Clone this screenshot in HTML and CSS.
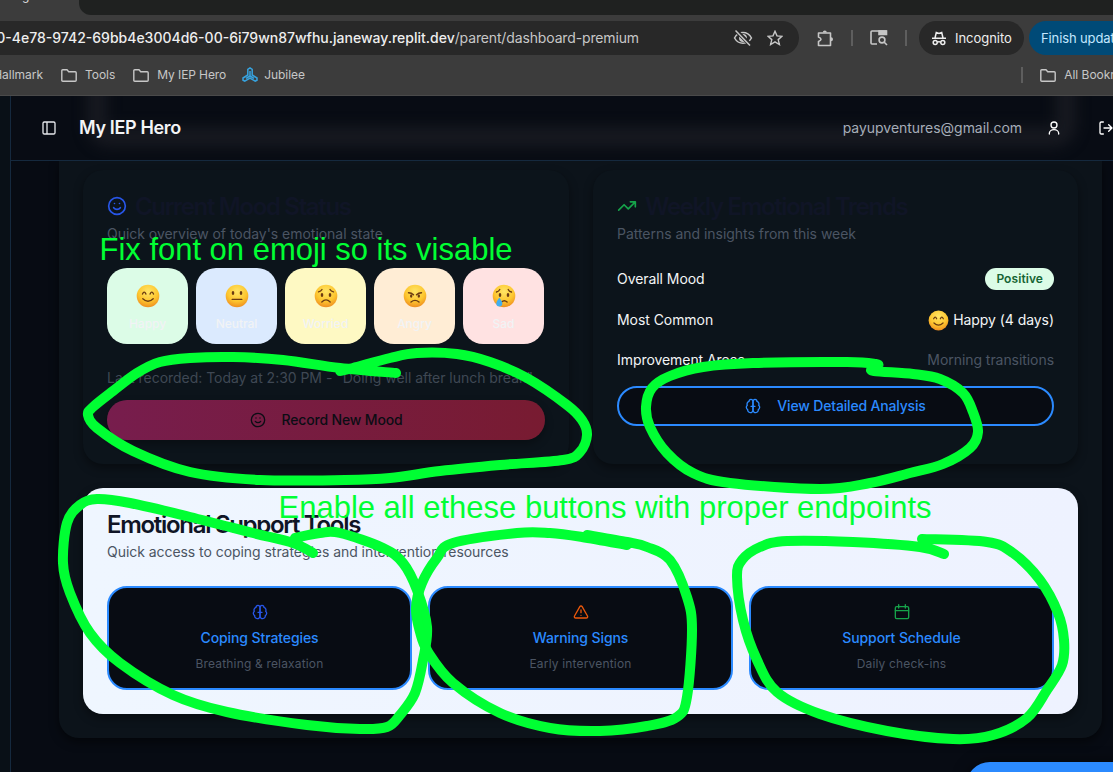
FILE: index.html
```html
<!DOCTYPE html>
<html lang="en">
<head>
<meta charset="utf-8">
<title>My IEP Hero</title>
<link rel="stylesheet" href="styles.css">
</head>
<body>
<svg class="defs" width="0" height="0" aria-hidden="true">
  <defs>
    <radialGradient id="skin" cx=".5" cy=".3" r=".72"><stop offset="0" stop-color="#ffe566"/><stop offset=".6" stop-color="#fdc62f"/><stop offset="1" stop-color="#ee8b20"/></radialGradient>
    <symbol id="folder" viewBox="0 0 16 13"><path d="M.8 1.8q0-1 1-1H6l1.7 1.9h6.5q1 0 1 1v7.500q0 1-1 1H1.800q-1 0-1-1z" fill="none" stroke="currentColor" stroke-width="1.4"/></symbol>
    <symbol id="smile" viewBox="0 0 24 24"><g fill="none" stroke="currentColor" stroke-width="2" stroke-linecap="round"><circle cx="12" cy="12" r="10"/><path d="M8 14s1.500 2 4 2 4-2 4-2M9 9h.01M15 9h.01"/></g></symbol>
    <symbol id="brain" viewBox="0 0 24 24"><g fill="none" stroke="currentColor" stroke-width="2" stroke-linecap="round" stroke-linejoin="round"><path d="M12 5a3 3 0 1 0-5.997.125 4 4 0 0 0-2.526 5.770 4 4 0 0 0 .556 6.588A4 4 0 1 0 12 18z"/><path d="M12 5a3 3 0 1 1 5.997.125 4 4 0 0 1 2.526 5.770 4 4 0 0 1-.556 6.588A4 4 0 1 1 12 18z"/><path d="M9 12.500h6"/></g></symbol>
    <symbol id="happy" viewBox="0 0 24 24"><circle cx="12" cy="12" r="11.300" fill="url(#skin)"/><g fill="none" stroke="#6b3b12" stroke-width="1.400" stroke-linecap="round"><path d="M6.500 10q1.700-3.800 3.400 0M14.100 10q1.700-3.800 3.400 0M6.800 14.800q5.200 5 10.400 0"/></g></symbol>
    <symbol id="neutral" viewBox="0 0 24 24"><circle cx="12" cy="12" r="11.300" fill="url(#skin)"/><g fill="#6b3b12"><ellipse cx="8" cy="9" rx="1.300" ry="2"/><ellipse cx="16" cy="9" rx="1.300" ry="2"/><rect x="6.500" y="14.700" width="11" height="1.400" rx=".7"/></g></symbol>
    <symbol id="worried" viewBox="0 0 24 24"><circle cx="12" cy="12" r="11.300" fill="url(#skin)"/><g fill="#6b3b12"><ellipse cx="8" cy="11" rx="1.300" ry="1.900"/><ellipse cx="16" cy="11" rx="1.300" ry="1.900"/></g><path d="M4.500 7.800q2.500-.3 3.500-2.300M19.500 7.800q-2.500-.3-3.500-2.300M7.800 18q4.200-4.400 8.400 0" fill="none" stroke="#6b3b12" stroke-width="1.300" stroke-linecap="round"/></symbol>
    <symbol id="angry" viewBox="0 0 24 24"><circle cx="12" cy="12" r="11.300" fill="url(#skin)"/><g fill="#6b3b12"><ellipse cx="8.200" cy="12" rx="1.200" ry="1.700"/><ellipse cx="15.800" cy="12" rx="1.200" ry="1.700"/></g><path d="M5.500 8.800q3 .1 5 2M18.500 8.800q-3 .1-5 2M8 18q4-3.300 8 0" fill="none" stroke="#6b3b12" stroke-width="1.400" stroke-linecap="round"/></symbol>
    <symbol id="sad" viewBox="0 0 24 24"><circle cx="12" cy="12" r="11.300" fill="url(#skin)"/><g fill="#6b3b12"><ellipse cx="8" cy="11" rx="1.300" ry="1.900"/><ellipse cx="16" cy="11" rx="1.300" ry="1.900"/></g><path d="M4.500 8q2.300-.5 3.300-2.500M19.500 8q-2.300-.5-3.300-2.500M9.500 18q2.800-2.600 5.600 0" fill="none" stroke="#6b3b12" stroke-width="1.300" stroke-linecap="round"/><path d="M7.300 13.500q3 4 3 6a3 3 0 0 1-6 0q0-2 3-6z" fill="#41aef0"/></symbol>
  </defs>
</svg>

<div class="browser">
  <div class="tabs"><div class="tab-end"><span>g</span></div><div class="strip"></div></div>
  <div class="toolbar">
    <div class="address">
      <div class="url"><b>60-4e78-9742-69bb4e3004d6-00-6i79wn87wfhu.janeway.replit.dev</b><span>/parent/dashboard-premium</span></div>
      <svg class="eye" viewBox="0 0 20 18" width="20" height="18" fill="none" stroke="currentColor" stroke-width="1.500"><path d="M1.500 9C5.500 1.800 14.500 1.800 18.500 9C14.500 16 5.500 16 1.500 9z"/><circle cx="10" cy="9" r="3.200" fill="currentColor"/><path d="M3 1.500 17.500 16" stroke="#282828" stroke-width="4"/><path d="M2.500 1.500 17 16.500"/></svg>
      <svg viewBox="0 0 16 16" width="16" height="16" fill="none" stroke="currentColor" stroke-width="1.400"><path d="m8 1.300 2 4.600 5 .4-3.800 3.300 1.200 4.900L8 11.900l-4.400 2.600 1.200-4.900L1 6.300l5-.4z"/></svg>
    </div>
    <svg class="puzzle" viewBox="0 0 17 17" width="17" height="17"><path d="M1.500 3h12v12.500h-12v-4q2.500-1 2.500-2.200T1.500 7z" fill="none" stroke="currentColor" stroke-width="1.600" stroke-linejoin="round"/><path d="M5.800 2.500a2 2 0 0 1 4 0zM14 7.300a2 2 0 0 1 0 4z" fill="currentColor"/></svg>
    <i class="bar"></i>
    <svg class="lens" viewBox="0 0 18 16" width="18" height="16" fill="none" stroke="currentColor" stroke-width="1.600"><path d="M7 14H2q-1 0-1-1V2q0-1 1-1h14v4"/><path d="M9 1h7.500v3.500H9z" fill="currentColor"/><circle cx="12" cy="10" r="2.900"/><path d="m14 12 3 3"/></svg>
    <i class="bar second"></i>
    <div class="incognito">
      <svg viewBox="0 0 16 15" width="16" height="15" fill="none" stroke="currentColor" stroke-width="1.500"><path d="M1 7.300h14M4 7 5.300 1.500 8 2.400l2.700-.9L12 7"/><circle cx="4.200" cy="11.500" r="2"/><circle cx="11.800" cy="11.500" r="2"/><path d="M6 11.200q2-1 4 0"/></svg>
      <span>Incognito</span>
    </div>
    <div class="update"><span>Finish update</span></div>
  </div>
  <div class="bookmarks">
    <span class="bm first">Hallmark</span>
    <span class="bm tools"><svg width="16" height="13"><use href="#folder"/></svg><span>Tools</span></span>
    <span class="bm hero"><svg width="16" height="13"><use href="#folder"/></svg><span>My IEP Hero</span></span>
    <span class="bm jubilee"><svg viewBox="0 0 16 16" width="16" height="16" fill="none" stroke="#37a3df" stroke-width="1.500"><path d="M5.800 8V2.500L8 1l2.200 1.500V8l4.800 3v2.200l-1.800 1L8 11.200l-5.200 3-1.800-1V11zM8 4v5l-4 2.300M8 9l4 2.300"/></svg><span>Jubilee</span></span>
    <span class="bm all"><i class="bar"></i><svg width="16" height="13"><use href="#folder"/></svg><span>All Bookmarks</span></span>
  </div>
</div>

<div class="app">
  <aside class="side"></aside>
  <div class="content">
    <header class="header">
      <div class="glow"></div>
      <svg viewBox="0 0 24 24" width="16" height="16" fill="none" stroke="#e5e7eb" stroke-width="2"><rect x="3" y="3" width="18" height="18" rx="2"/><path d="M9 3v18"/></svg>
      <h1>My IEP Hero</h1>
      <span class="email">payupventures@gmail.com</span>
      <svg class="user" viewBox="0 0 24 24" width="16" height="16" fill="none" stroke="#fff" stroke-width="2" stroke-linecap="round"><circle cx="12" cy="7.500" r="4.500"/><path d="M5 21v-1a7 5.500 0 0 1 14 0v1"/></svg>
      <svg class="logout" viewBox="0 0 24 24" width="16" height="16" fill="none" stroke="#fff" stroke-width="2" stroke-linecap="round" stroke-linejoin="round"><path d="M8 3H5a2 2 0 0 0-2 2v14a2 2 0 0 0 2 2h3M16 17l5-5-5-5M21 12H9"/></svg>
    </header>
    <main class="scroll">
      <section class="panel">
        <div class="pair">
          <article class="card">
            <h2 class="ghost"><svg class="blue" width="20" height="20"><use href="#smile"/></svg><span>Current Mood Status</span></h2>
            <p class="desc">Quick overview of today's emotional state</p>
            <div class="moods">
              <div class="mood green"><svg width="24" height="24"><use href="#happy"/></svg><span>Happy</span></div>
              <div class="mood sky"><svg width="24" height="24"><use href="#neutral"/></svg><span>Neutral</span></div>
              <div class="mood yellow"><svg width="24" height="24"><use href="#worried"/></svg><span>Worried</span></div>
              <div class="mood orange"><svg width="24" height="24"><use href="#angry"/></svg><span>Angry</span></div>
              <div class="mood red"><svg width="24" height="24"><use href="#sad"/></svg><span>Sad</span></div>
            </div>
            <p class="last">Last recorded: Today at 2:30 PM - "Doing well after lunch break"</p>
            <button class="btn record"><svg width="16" height="16"><use href="#smile"/></svg><span>Record New Mood</span></button>
          </article>
          <article class="card">
            <h2 class="ghost"><svg class="trend" viewBox="0 0 24 24" width="20" height="20" fill="none" stroke="currentColor" stroke-width="2" stroke-linecap="round" stroke-linejoin="round"><path d="m22 7-8.500 8.500-5-5L2 17M16 7h6v6"/></svg><span>Weekly Emotional Trends</span></h2>
            <p class="desc">Patterns and insights from this week</p>
            <div class="rows">
              <div class="row"><span>Overall Mood</span><span class="badge">Positive</span></div>
              <div class="row common"><span>Most Common</span><span class="value"><svg width="21" height="21"><use href="#happy"/></svg>Happy (4 days)</span></div>
              <div class="row"><span>Improvement Areas</span><span class="muted">Morning transitions</span></div>
            </div>
            <button class="btn analysis"><svg width="16" height="16"><use href="#brain"/></svg><span>View Detailed Analysis</span></button>
          </article>
        </div>
        <article class="card light">
          <h2><span>Emotional Support Tools</span></h2>
          <p class="desc">Quick access to coping strategies and intervention resources</p>
          <div class="tools-grid">
            <button class="tool"><svg class="blue" width="16" height="16"><use href="#brain"/></svg><span>Coping Strategies</span><small>Breathing &amp; relaxation</small></button>
            <button class="tool"><svg class="warn" viewBox="0 0 24 24" width="16" height="16" fill="none" stroke="currentColor" stroke-width="2" stroke-linecap="round" stroke-linejoin="round"><path d="m21.730 18-8-14a2 2 0 0 0-3.480 0l-8 14A2 2 0 0 0 4 21h16a2 2 0 0 0 1.730-3M12 9v4M12 17h.01"/></svg><span>Warning Signs</span><small>Early intervention</small></button>
            <button class="tool"><svg class="trend" viewBox="0 0 24 24" width="16" height="16" fill="none" stroke="currentColor" stroke-width="2" stroke-linecap="round" stroke-linejoin="round"><rect x="2" y="4" width="20" height="18" rx="2"/><path d="M7 1v5M17 1v5M2 10h20"/></svg><span>Support Schedule</span><small>Daily check-ins</small></button>
          </div>
        </article>
      </section>
    </main>
  </div>
  <div class="floating"></div>
</div>

<svg class="markup" width="1113" height="772">
  <g id="strokes"></g>
  <text x="99.500" y="260" textLength="413" lengthAdjust="spacingAndGlyphs">Fix font on emoji so its visable</text>
  <text x="278.500" y="518" textLength="653" lengthAdjust="spacingAndGlyphs">Enable all ethese buttons with proper endpoints</text>
</svg>
<script src="script.js"></script>
</body>
</html>
```
FILE: styles.css
```css
* { box-sizing: border-box; }
body { margin: 0; width: 1113px; height: 772px; overflow: hidden; position: relative; display: flex; flex-direction: column; background: #070b13; color: #f3f4f6; font: 14px/20px Inter, sans-serif; letter-spacing: -.03px; }
h1, h2, p { margin: 0; }
svg { display: block; flex: none; }
button { font: inherit; letter-spacing: inherit; }
.defs { position: absolute; }

/* browser chrome */
.browser { height: 96px; flex: none; background: #3c3c3c; border-bottom: 1px solid #4a4a4a; color: #c7c7c7; }
.tabs { display: flex; height: 15px; background: #3c3c3c; }
.tab-end { width: 79px; overflow: hidden; padding-left: 22px; color: #ddd; font-size: 12px; line-height: 12px; }
.tab-end span { display: block; margin-top: -10px; }
.strip { flex: 1; background: #1f2120; border-bottom-left-radius: 12px; }
.toolbar { display: flex; align-items: center; height: 46px; }
.address { flex: none; width: 799px; height: 34px; background: #282828; border-radius: 0 17px 17px 0; display: flex; align-items: center; padding-right: 16px; }
.url { width: 639px; display: flex; justify-content: flex-end; white-space: nowrap; font-size: 14px; flex: none; overflow: hidden; letter-spacing: -.14px; }
.url b { font-weight: 450; color: #eee; letter-spacing: 0; }
.eye { margin: 0 14px 0 94px; }
.puzzle { margin-left: 18px; }
.bar { width: 2px; height: 16px; background: #5e5e5e; flex: none; }
.toolbar .bar { margin-left: 17px; }
.lens { margin-left: 17px; }
.toolbar .bar.second { margin-left: 17px; }
.incognito { margin-left: 12px; width: 105px; height: 34px; border-radius: 17px; background: #282828; color: #eee; display: flex; align-items: center; gap: 8px; padding-left: 12px; flex: none; font-size: 13px; }
.update { margin-left: 5px; width: 120px; height: 34px; border-radius: 17px; background: #004a77; color: #c2e7ff; padding: 7px 0 0 12px; flex: none; font-size: 13px; white-space: nowrap; letter-spacing: -.12px; }
.bookmarks { display: flex; align-items: center; height: 28px; font-size: 12px; white-space: nowrap; }
.bm { display: flex; align-items: center; gap: 8px; flex: none; }
.first { width: 43px; justify-content: flex-end; }
.tools { margin-left: 18px; }
.hero { margin-left: 18px; letter-spacing: -.1px; }
.jubilee { margin-left: 16px; gap: 6px; }
.all { position: relative; margin-left: auto; margin-right: -32px; }
.all .bar { margin-right: 9px; }

/* application frame */
.app { flex: 1; display: flex; position: relative; min-height: 0; }
.side { width: 11px; background: #091017; border-right: 1px solid #15293e; }
.content { flex: 1; display: flex; flex-direction: column; min-width: 0; }
.header { position: relative; height: 65px; flex: none; overflow: hidden; display: flex; align-items: center; padding-left: 30px; background: #080c14; border-bottom: 1px solid #15293e; }
.header > svg, .header > h1, .header > span { position: relative; }
.glow { position: absolute; left: 76px; top: -100px; width: 989px; height: 151px; border: 20px solid #171920; border-radius: 22px; filter: blur(7px); }
.header h1 { margin-left: 22px; font-size: 18px; line-height: 28px; font-weight: 600; letter-spacing: -.35px; }
.email { margin-left: auto; color: #a6adb8; }
.user { margin-left: 24px; }
.logout { margin: 0 -1px 0 36px; }
.scroll { flex: 1; padding: 0 11px 34px 48px; background: #070b13; min-height: 0; }
.panel { height: 577px; border-radius: 0 0 20px 20px; background: #0c131a; padding: 9px 24px 24px; box-shadow: 0 4px 10px rgba(0,0,0,.5); }
.pair { display: grid; grid-template-columns: 486px 485px; gap: 24px; }
.card { border-radius: 20px; padding: 24px; background: #0c141b; box-shadow: 0 4px 10px rgba(0,0,0,.4); }
h2 { display: flex; align-items: center; gap: 8px; height: 24px; font-size: 24px; line-height: 24px; font-weight: 600; letter-spacing: -1.3px; white-space: nowrap; }
h2 span { padding-top: 2px; }
.ghost { color: #101526; letter-spacing: -1.35px; }
.blue { color: #2856e8; }
.trend { color: #16a34a; }
.warn { color: #ea580c; }
.desc { margin-top: 6px; color: #4b5563; white-space: nowrap; }
.moods { margin-top: 24px; display: grid; grid-template-columns: repeat(5, 81px); gap: 8px; }
.mood { height: 76px; border-radius: 20px; padding: 16px 0 12px; display: flex; flex-direction: column; align-items: center; gap: 8px; font-size: 12px; line-height: 16px; font-weight: 500; color: #f1f3f5; }
.green { background: #dcfce7; }
.sky { background: #dbeafe; }
.yellow { background: #fef9c3; }
.orange { background: #ffedd5; }
.red { background: #ffe2e2; }
.last { margin-top: 24px; color: #3f4854; white-space: nowrap; }
.btn { display: flex; align-items: center; justify-content: center; gap: 16px; width: 100%; height: 40px; border-radius: 20px; border: 0; font-weight: 500; letter-spacing: -.17px; }
.record { margin-top: 12px; background: linear-gradient(90deg, #771d4d, #781b31); color: #0b0d14; box-shadow: 0 4px 8px rgba(0,0,0,.3); }
.rows { margin-top: 24px; display: flex; flex-direction: column; gap: 16px; }
.row { display: flex; align-items: center; justify-content: space-between; letter-spacing: -.06px; }
.common { height: 28px; }
.value { display: flex; align-items: center; gap: 4px; }
.muted { color: #4b5563; }
.badge { height: 22px; border-radius: 11px; padding: 1px 11px; background: #dcfce7; color: #166534; font-size: 12px; font-weight: 600; letter-spacing: .08px; }
.analysis { margin-top: 16px; background: #080c13; border: 2px solid #2b8aff; color: #2b8aff; }
.light { margin-top: 24px; background: linear-gradient(90deg, #eff6ff, #eef2ff); color: #101526; }
.light .desc { color: #4b5563; letter-spacing: -.05px; }
.tools-grid { margin-top: 24px; display: grid; grid-template-columns: repeat(3, 1fr); gap: 16px; }
.tool { height: 104px; padding: 16px; display: flex; flex-direction: column; align-items: center; gap: 8px; border: 2px solid #2b8aff; border-radius: 20px; background: #080c13; color: #2b8aff; font-weight: 500; line-height: 20px; letter-spacing: -.1px; }
.tool small { font-size: 12px; line-height: 16px; font-weight: 400; color: #4b5563; letter-spacing: .17px; }
.floating { position: absolute; left: 966px; top: 666px; width: 180px; height: 48px; border-radius: 24px; background: #2b8aff; box-shadow: 0 0 14px rgba(0,0,0,.5); }

/* hand-drawn notes over the page */
.markup { position: absolute; left: 0; top: 0; }
.markup text { font: 32px "Liberation Sans", sans-serif; letter-spacing: 0; fill: #00ff33; }
.markup path { fill: none; stroke: #00ff33; stroke-width: 10; stroke-linecap: round; stroke-linejoin: round; }
```
FILE: script.js
```js
// Freehand strokes, each smoothed through its sample points.
const strokes = [
  [396,373, 340,368, 283,360, 233,357, 190,358, 160,362, 137,373, 113,391, 93,407, 88,415, 97,428, 133,451, 190,472, 260,480, 345,480, 390,478, 440,471, 500,465, 563,460, 580,452, 587,435, 582,420, 567,405, 527,378, 490,362, 457,354, 417,353, 390,358, 353,368, 340,371],
  [877,366, 876,364, 847,362, 753,363, 703,367, 670,376, 652,388, 646,407, 650,427, 667,453, 693,473, 730,483, 820,489, 870,483, 910,473, 943,464, 970,448, 978,432, 973,412, 963,393, 940,379, 913,374, 874,371, 874,368],
  [313,553, 293,543, 253,533, 190,517, 130,503, 97,499, 80,505, 67,523, 63,563, 70,593, 90,633, 120,663, 173,695, 227,712, 307,725, 360,729, 387,727, 400,715, 415,693, 423,660, 427,627, 417,590, 403,563, 383,548, 340,533, 320,533, 295,538],
  [627,545, 582,537, 550,533, 517,533, 453,543, 437,558, 422,583, 416,608, 420,632, 428,652, 453,683, 500,713, 550,728, 600,731, 647,726, 677,717, 687,697, 692,630, 687,597, 670,560, 647,547, 627,542, 587,535],
  [944,554, 920,547, 853,542, 787,541, 760,547, 742,560, 737,577, 743,620, 757,660, 777,692, 820,714, 887,731, 953,739, 993,735, 1027,718, 1047,690, 1062,665, 1064,640, 1058,613, 1040,580, 1013,553, 987,542, 922,539]
];
const group = document.getElementById('strokes');
for (const flat of strokes) {
  const p = [];
  for (let i = 0; i < flat.length; i += 2) p.push([flat[i], flat[i + 1]]);
  let d = `M${p[0]}`;
  for (let i = 0; i < p.length - 1; i++) {
    const a = p[Math.max(i - 1, 0)], b = p[i], c = p[i + 1], e = p[Math.min(i + 2, p.length - 1)];
    d += `C${b[0] + (c[0] - a[0]) / 6},${b[1] + (c[1] - a[1]) / 6} ${c[0] - (e[0] - b[0]) / 6},${c[1] - (e[1] - b[1]) / 6} ${c}`;
  }
  const path = document.createElementNS('http://www.w3.org/2000/svg', 'path');
  path.setAttribute('d', d);
  group.append(path);
}
```
